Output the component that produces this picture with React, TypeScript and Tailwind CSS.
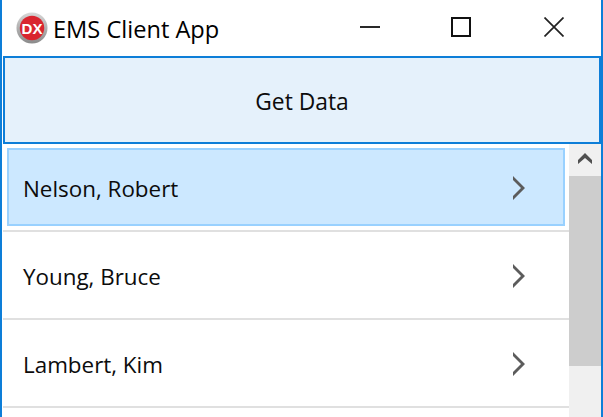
import React from "react";

const font = { fontFamily: '"Open Sans", "Noto Sans", sans-serif' };

function Chevron() {
  return (
    <svg width="12" height="24" viewBox="0 0 12 24" className="block">
      <path d="M0 0 L12 12 L0 24 V20 L8 12 L0 4 Z" fill="#5c5c5c" />
    </svg>
  );
}

function Row({ name, selected }: { name: string; selected?: boolean }) {
  return (
    <div className="h-[88px] shrink-0 flex flex-col border-b-2 border-[#e0e0e0] bg-white">
      <div
        className={
          selected
            ? "mx-[4px] mt-[4px] h-[78px] flex items-center justify-between border-2 border-[#99d1ff] bg-[#cce8ff] pt-[2px] pl-[14px] pr-[38px]"
            : "flex-1 flex items-center justify-between pt-[2px] pl-[20px] pr-[44px]"
        }
      >
        <span className="block pt-[3px] text-[22.4px] leading-none text-[#0c0c0c]">{name}</span>
        <Chevron />
      </div>
    </div>
  );
}

export default function App() {
  return (
    <div style={font} className="h-[417px] w-[603px] overflow-hidden bg-white border-x-[2px] border-[#0d7ed8] flex flex-col">
      <div className="h-[56px] shrink-0 flex items-center bg-white pl-[14px]">
        <svg width="32" height="32" viewBox="0 0 34 34" className="shrink-0 mb-[1px]">
          <defs>
            <linearGradient id="ring" x1="0" y1="0" x2="0" y2="1">
              <stop offset="0" stopColor="#d8d8d8" />
              <stop offset="1" stopColor="#8a8a8a" />
            </linearGradient>
          </defs>
          <circle cx="17" cy="17" r="16.5" fill="url(#ring)" />
          <circle cx="17" cy="17" r="13" fill="#d9252f" />
          <text x="17" y="23" textAnchor="middle" fontSize="16" fontWeight="700" fill="#fff" fontFamily="Liberation Sans, sans-serif">DX</text>
        </svg>
        <span className="ml-[5px] block pt-[4px] text-[23.6px] leading-none text-black">EMS Client App</span>
        <div className="ml-auto flex items-center h-full pr-[37px] pb-[2px]">
          <svg width="20" height="20" viewBox="0 0 20 20" className="mr-[71px]"><path d="M0 10 H20" stroke="#111" strokeWidth="1.8" /></svg>
          <svg width="20" height="20" viewBox="0 0 20 20" className="mr-[73px]"><rect x="1" y="1" width="18" height="18" fill="none" stroke="#111" strokeWidth="2" /></svg>
          <svg width="20" height="20" viewBox="0 0 20 20"><path d="M0.5 0.5 L19.5 19.5 M19.5 0.5 L0.5 19.5" stroke="#222" strokeWidth="1.7" /></svg>
        </div>
      </div>
      <div className="h-[88px] shrink-0 ml-[1px] pt-[4px] flex items-center justify-center border-2 border-[#0d7ed8] bg-[#e5f1fb] text-[22.8px] text-[#0c0c0c]">
        Get Data
      </div>
      <div className="flex-1 flex min-h-0 pl-[1px]">
        <div className="flex-1 flex flex-col min-w-0 overflow-hidden">
          <Row name="Nelson, Robert" selected />
          <Row name="Young, Bruce" />
          <Row name="Lambert, Kim" />
        </div>
        <div className="w-[32px] shrink-0 bg-[#f0f0f0] flex flex-col">
          <div className="h-[32px] flex items-center justify-center">
            <svg width="14" height="11" viewBox="0 0 14 11" className="mb-[3px]"><path d="M0 7 L7 0 L14 7 V11 L7 5 L0 11 Z" fill="#505050" /></svg>
          </div>
          <div className="h-[190px] bg-[#cdcdcd]" />
        </div>
      </div>
    </div>
  );
}
